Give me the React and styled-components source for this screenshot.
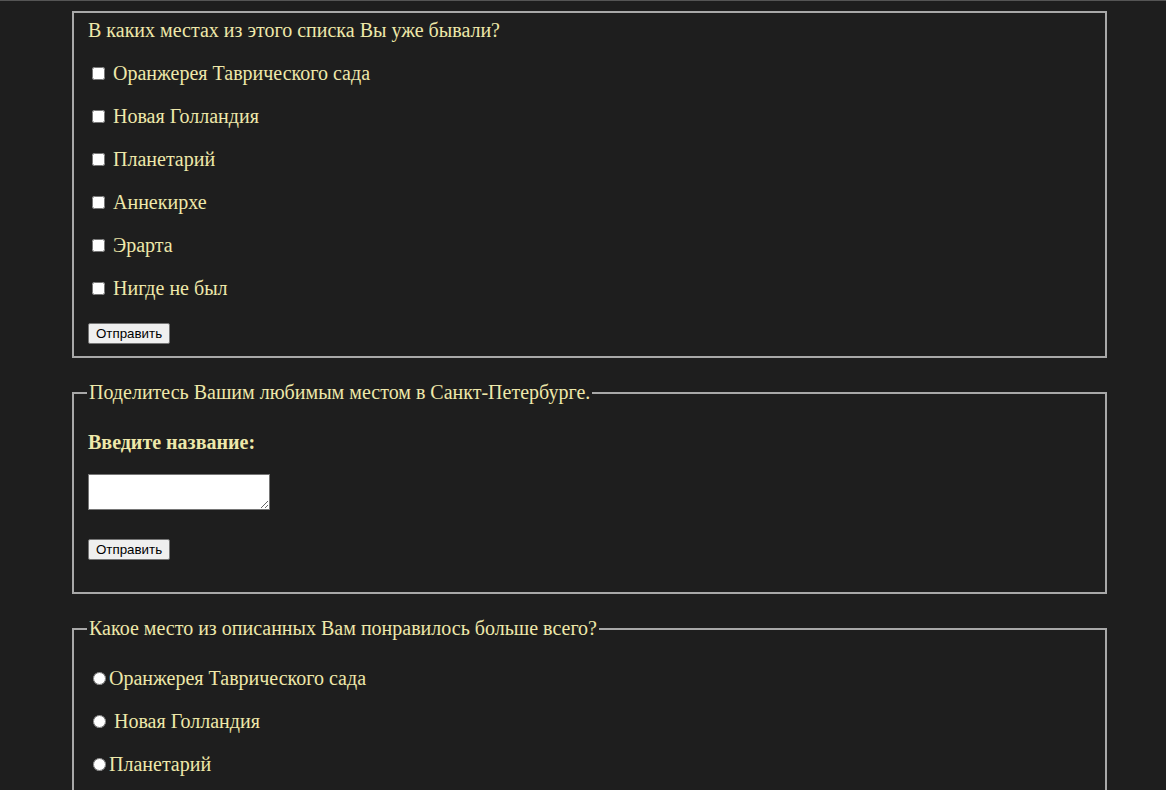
import React from "react";
import styled, { createGlobalStyle } from "styled-components";

const Global = createGlobalStyle`
  html, body { margin: 0; padding: 0; background: #1e1e1e; }
  body {
    border-top: 1px solid #555;
    color: palegoldenrod;
    font-family: "Liberation Serif", "Times New Roman", serif;
    font-size: 20px;
  }
`;

const Page = styled.main`
  width: 1035px;
  margin-left: 72px;
  padding-top: 10px;
  display: flex;
  flex-direction: column;
  gap: 23px;
`;

const Fieldset = styled.fieldset`
  margin: 0;
  padding: ${(p) => (p.$tight ? 6 : 7)}px 15px 12px 14px;
  border: 2px solid #a8a8a8;
  min-width: 0;
`;

const Legend = styled.legend`
  padding: 0 2px;
  line-height: 23px;
  margin-left: -1px;
`;

const Question = styled.p`
  margin: ${(p) => (p.$first ? "0" : "20px")} 0 20px;
  line-height: 23px;
  font-weight: ${(p) => (p.$bold ? "bold" : "normal")};
`;

const Row = styled.label`
  display: flex;
  align-items: center;
  height: 23px;
  margin-bottom: 20px;
  white-space: pre;
`;

const Check = styled.input.attrs({ type: "checkbox" })`
  width: 13px;
  height: 13px;
  margin: 0 3px 0 4px;
`;

const Radio = styled.input.attrs({ type: "radio" })`
  width: 13px;
  height: 13px;
  margin: 0 3px 0 5px;
`;

const Button = styled.button`
  font-family: "Liberation Sans", Arial, sans-serif;
  font-size: 13.33px;
  line-height: 16px;
  height: 21px;
  padding: 1px 7px;
  background: #efefef;
  color: #000;
  border: 1px solid #767676;
  border-radius: 2px;
  align-self: flex-start;
  margin-top: ${(p) => p.$top || 0}px;
  margin-bottom: ${(p) => p.$bottom || 0}px;
`;

const Stack = styled.div`
  display: flex;
  flex-direction: column;
  align-items: flex-start;
`;

const Spacer = styled.div`
  height: 20px;
`;

const TextArea = styled.textarea`
  width: 182px;
  height: 36px;
  box-sizing: border-box;
  border: 1px solid #767676;
  background: #fff;
  padding: 2px;
  margin: 0 0 29px;
  display: block;
`;

const places = [
  "Оранжерея Таврического сада",
  "Новая Голландия",
  "Планетарий",
  "Аннекирхе",
  "Эрарта",
  "Нигде не был",
];

export default function App() {
  return (
    <>
      <Global />
      <Page>
        <Fieldset $tight>
          <Stack>
            <Question $first>В каких местах из этого списка Вы уже бывали?</Question>
            {places.map((p) => (
              <Row key={p}>
                <Check />
                {" " + p}
              </Row>
            ))}
            <Button $top={3}>Отправить</Button>
          </Stack>
        </Fieldset>

        <Fieldset>
          <Legend>Поделитесь Вашим любимым местом в Санкт-Петербурге.</Legend>
          <Stack>
            <Question $bold>Введите название:</Question>
            <TextArea />
            <Button $bottom={20}>Отправить</Button>
          </Stack>
        </Fieldset>

        <Fieldset>
          <Legend>Какое место из описанных Вам понравилось больше всего?</Legend>
          <Stack>
            <Spacer />
            <Row>
              <Radio name="fav" />
              Оранжерея Таврического сада
            </Row>
            <Row>
              <Radio name="fav" />
              {" Новая Голландия"}
            </Row>
            <Row>
              <Radio name="fav" />
              Планетарий
            </Row>
          </Stack>
        </Fieldset>
      </Page>
    </>
  );
}
